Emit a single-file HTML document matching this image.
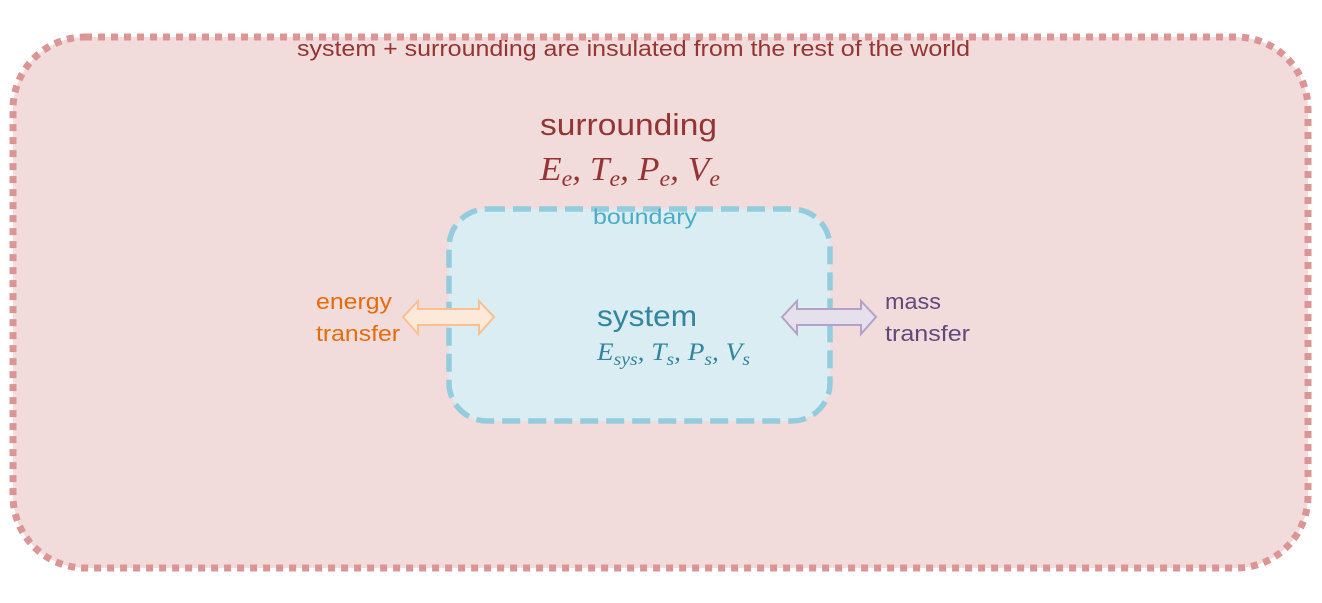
<!DOCTYPE html>
<html><head><meta charset="utf-8"><style>
html,body{margin:0;padding:0;background:#fff;}
svg{display:block}
text{font-family:"Liberation Sans",sans-serif}
.m{font-family:"Liberation Serif",serif;font-style:italic}
</style></head><body>
<svg width="1322" height="603" viewBox="0 0 1322 603">
<rect x="13" y="37" width="1295" height="531" rx="72" fill="#f1dbdb" stroke="#dc9595" stroke-width="7" stroke-dasharray="7 6"/>
<text x="297" y="56" font-size="22" fill="#953434" textLength="673" lengthAdjust="spacingAndGlyphs">system + surrounding are insulated from the rest of the world</text>
<text x="540" y="135" font-size="31" fill="#953434" textLength="177" lengthAdjust="spacingAndGlyphs">surrounding</text>
<text x="540" y="180" font-size="34" fill="#953434" class="m" textLength="180" lengthAdjust="spacingAndGlyphs">E<tspan font-size="23" dy="6">e</tspan><tspan dy="-6">, T</tspan><tspan font-size="23" dy="6">e</tspan><tspan dy="-6">, P</tspan><tspan font-size="23" dy="6">e</tspan><tspan dy="-6">, V</tspan><tspan font-size="23" dy="6">e</tspan></text>
<rect x="449" y="209" width="381" height="212" rx="38" fill="#daedf3" stroke="#93cddd" stroke-width="5.5" stroke-dasharray="18 8"/>
<text x="593" y="224" font-size="21" fill="#4bacc6" textLength="104" lengthAdjust="spacingAndGlyphs">boundary</text>
<text x="597" y="326" font-size="30" fill="#31859c" textLength="100" lengthAdjust="spacingAndGlyphs">system</text>
<text x="597" y="360" font-size="25" fill="#31859c" class="m" textLength="153" lengthAdjust="spacingAndGlyphs">E<tspan font-size="18" dy="5">sys</tspan><tspan dy="-5">, T</tspan><tspan font-size="18" dy="5">s</tspan><tspan dy="-5">, P</tspan><tspan font-size="18" dy="5">s</tspan><tspan dy="-5">, V</tspan><tspan font-size="18" dy="5">s</tspan></text>
<path d="M403,317 L418,301 L418,309 L479,309 L479,301 L494,317 L479,334 L479,325 L418,325 L418,334 Z" fill="#fde9d9" stroke="#fac090" stroke-width="2"/>
<path d="M782,317 L797,301 L797,309 L861,309 L861,301 L876,317 L861,334 L861,325 L797,325 L797,334 Z" fill="#e5e0ec" stroke="#b3a2c7" stroke-width="2"/>
<text x="316" y="309" font-size="22" fill="#e46c0a" textLength="76" lengthAdjust="spacingAndGlyphs">energy</text>
<text x="316" y="341" font-size="22" fill="#e46c0a" textLength="84" lengthAdjust="spacingAndGlyphs">transfer</text>
<text x="885" y="309" font-size="22" fill="#604a7b" textLength="56" lengthAdjust="spacingAndGlyphs">mass</text>
<text x="885" y="341" font-size="22" fill="#604a7b" textLength="85" lengthAdjust="spacingAndGlyphs">transfer</text>
</svg>
</body></html>
